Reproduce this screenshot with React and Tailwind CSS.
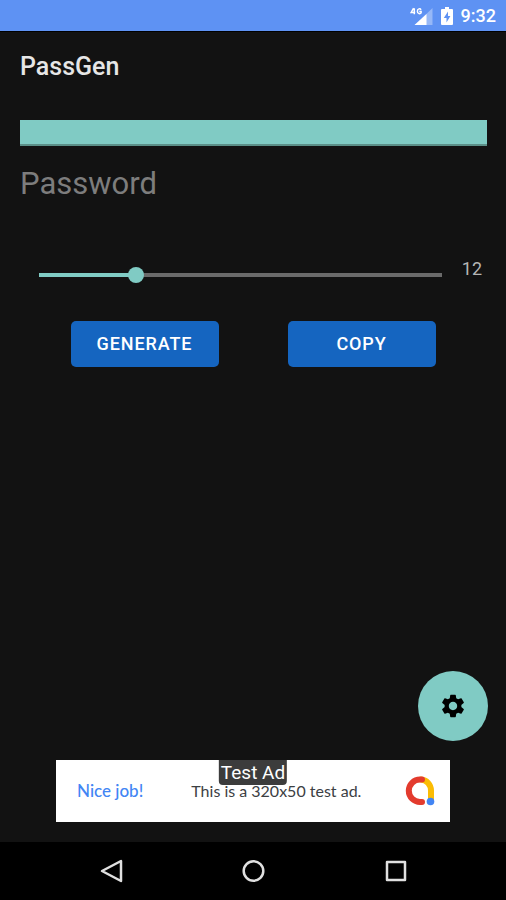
import { useState } from "react";

const MAX_LENGTH = 50;

// android status bar: signal, battery and clock
function StatusBar() {
  return (
    <div className="flex h-8 items-center justify-end border-b border-black bg-[#5e92f3] pr-2.5 text-white">
      <svg viewBox="0 0 24 20" className="mr-2 h-5 w-6" aria-hidden="true">
        <path d="M23.500 2v17H6z" fill="#fff" opacity="0.35" />
        <path d="M17.500 8v11H5.500z" fill="#fff" />
        <path
          d="M4.600 2.200 2.200 6.400h4M5.300 2.200v6M12 3.800C11.300 2.400 8.400 2.300 8.400 5.200c0 3 3 2.800 3.700 1.700V5.500h-1.800"
          fill="none"
          stroke="#fff"
          strokeWidth="1.500"
        />
      </svg>
      <svg viewBox="0 0 12 18" className="mr-2 h-[18px] w-3" aria-hidden="true">
        <path
          d="M4 0h4v2h3a1 1 0 0 1 1 1v14a1 1 0 0 1-1 1H1a1 1 0 0 1-1-1V3a1 1 0 0 1 1-1h3z"
          fill="#fff"
        />
        <path d="M7 4.500 2.800 11h2.700v4.500L9.400 9H7z" fill="#5e92f3" />
      </svg>
      <span className="text-lg leading-6 font-medium">9:32</span>
    </div>
  );
}

function AdBanner() {
  return (
    <div className="relative mx-auto flex h-[62px] w-[394px] max-w-full items-center bg-white pr-3.5 pl-[21px] font-['Lato',sans-serif]">
      <span className="text-[17px] font-medium text-[#4285f4]">Nice job!</span>
      <span className="ml-12 flex-1 text-base text-[#3c4043]">This is a 320x50 test ad.</span>
      <svg viewBox="0 0 32 32" className="size-8" aria-hidden="true">
        <g fill="none" strokeWidth="6" strokeLinecap="round">
          <path d="M17 4.500A10.500 11 0 0 1 27 15.500V26" stroke="#fbbc04" />
          <path d="M18 4.500H16a11.200 11.200 0 0 0 0 22.400h2" stroke="#e33b2e" />
        </g>
        <circle cx="26.500" cy="26.500" r="3.800" fill="#4285f4" />
      </svg>
      <span className="absolute top-0 left-1/2 -translate-x-1/2 rounded-b bg-[#3c3c3c] px-0.5 font-['Roboto',sans-serif] text-[19px] leading-[25px] whitespace-nowrap text-white">
        Test Ad
      </span>
    </div>
  );
}

function NavBar() {
  const button = "flex size-8 items-center justify-center text-[#e0e0e0]";
  return (
    <nav className="flex h-[58px] items-center justify-around bg-black px-10">
      <button className={button} aria-label="Back">
        <svg viewBox="0 0 24 24" className="size-6" fill="none" stroke="currentColor" strokeWidth="2.500" strokeLinejoin="round">
          <path d="M22 2v20L3 12z" />
        </svg>
      </button>
      <button className={button} aria-label="Home">
        <svg viewBox="0 0 24 24" className="size-6" fill="none" stroke="currentColor" strokeWidth="2.500">
          <circle cx="12.500" cy="12" r="9.800" />
        </svg>
      </button>
      <button className={button} aria-label="Recent apps">
        <svg viewBox="0 0 24 24" className="size-6" fill="none" stroke="currentColor" strokeWidth="2.500" strokeLinejoin="round">
          <path d="M4 3h18v18H4z" />
        </svg>
      </button>
    </nav>
  );
}

export default function App() {
  const [length, setLength] = useState(12);
  const filled = (length / MAX_LENGTH) * 100;
  const action =
    "h-[46px] w-[148px] rounded-[5px] bg-[#1565c0] text-lg font-medium tracking-wider text-white";

  return (
    <div className="flex min-h-screen flex-col bg-[#121212] font-['Roboto',sans-serif]">
      <StatusBar />
      <header className="flex h-[70px] items-center px-5">
        <h1 className="text-[25px] font-medium text-[#e6e6e6]">PassGen</h1>
      </header>

      <main className="flex flex-1 flex-col">
        <div className="flex flex-col pt-[18px] pr-[19px] pl-5">
          <input
            id="password"
            type="text"
            className="h-[26px] w-full border-b-2 border-[#5b8f88] bg-[#80cbc4] px-1 text-black outline-none"
          />
          <label htmlFor="password" className="mt-4 text-[31px] leading-11 text-[#7d7d7d]">
            Password
          </label>
        </div>

        <div className="mt-[53px] flex h-6 items-center pr-6 pl-[31px]">
          <input
            id="length"
            type="range"
            min="0"
            max={MAX_LENGTH}
            value={length}
            onChange={(e) => setLength(Number(e.target.value))}
            aria-label="Password length"
            className="mt-2 h-4 min-w-0 flex-1 appearance-none bg-transparent bg-[length:calc(100%-16px)_4px] bg-center bg-no-repeat [&::-webkit-slider-thumb]:size-4 [&::-webkit-slider-thumb]:appearance-none [&::-webkit-slider-thumb]:rounded-full [&::-webkit-slider-thumb]:bg-[#80cbc4]"
            style={{
              backgroundImage: `linear-gradient(to right, #80cbc4 ${filled}%, #6a6a6a ${filled}%)`,
            }}
          />
          <output htmlFor="length" className="mb-1 ml-3 text-lg leading-5 text-[#b5b5b5]">
            {length}
          </output>
        </div>

        <div className="mt-[38px] flex justify-around px-9">
          <button className={action}>GENERATE</button>
          <button className={action}>COPY</button>
        </div>

        <div className="mt-auto flex flex-col pb-5">
          <button
            aria-label="Settings"
            className="mr-[18px] mb-[19px] flex size-[70px] items-center justify-center self-end rounded-full bg-[#80cbc4] text-black"
          >
            <svg viewBox="0 0 24 24" className="size-7" fill="currentColor">
              <path d="M19.140 12.940c.04-.3.060-.61.060-.94 0-.32-.02-.64-.07-.94l2.030-1.580c.18-.14.23-.41.12-.61l-1.920-3.320c-.12-.22-.37-.29-.59-.22l-2.390.96c-.5-.38-1.030-.7-1.620-.94l-.36-2.540c-.04-.24-.24-.41-.48-.41h-3.840c-.24 0-.43.17-.47.41l-.36 2.540c-.59.24-1.130.57-1.620.94l-2.390-.96c-.22-.08-.47 0-.59.22L2.740 8.870c-.12.21-.08.470.12.61l2.030 1.580c-.05.3-.09.630-.09.940s.02.640.07.940l-2.030 1.580c-.18.140-.23.410-.12.610l1.920 3.320c.12.220.37.290.59.220l2.390-.96c.5.380 1.030.700 1.620.940l.36 2.540c.05.240.24.410.48.410h3.840c.24 0 .44-.17.47-.41l.36-2.540c.59-.24 1.130-.56 1.620-.94l2.390.96c.22.080.47 0 .59-.22l1.920-3.320c.12-.22.070-.47-.12-.61zM12 15.600c-1.980 0-3.600-1.620-3.600-3.600s1.620-3.600 3.600-3.600 3.600 1.620 3.600 3.600-1.620 3.600-3.600 3.600z" />
            </svg>
          </button>
          <AdBanner />
        </div>
      </main>
      <NavBar />
    </div>
  );
}
